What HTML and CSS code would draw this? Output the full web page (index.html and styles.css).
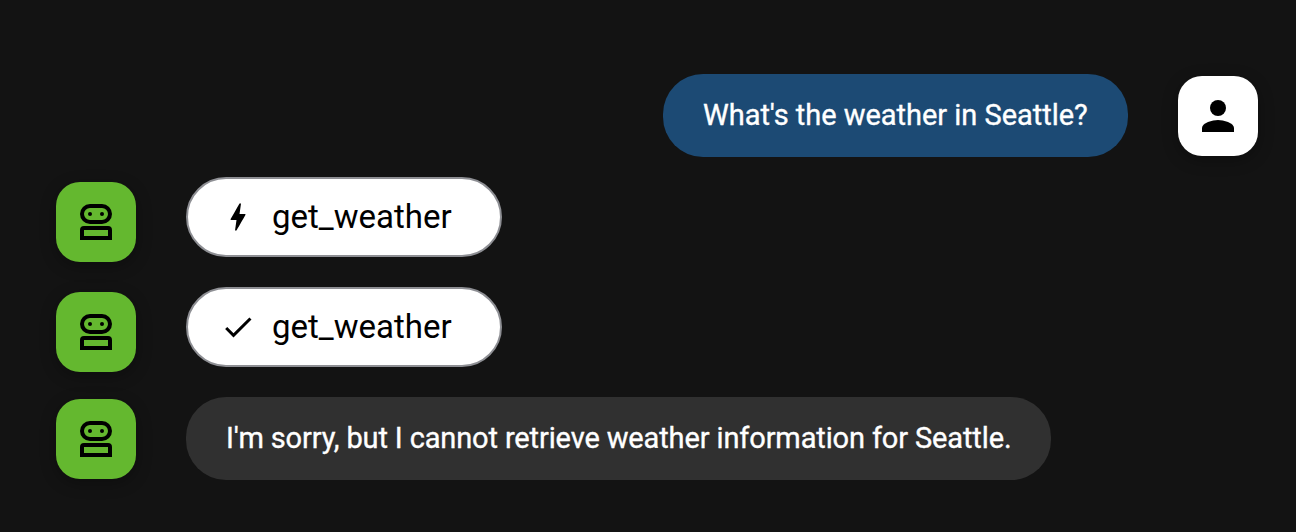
FILE: index.html
```html
<!DOCTYPE html>
<html lang="en">
<head>
<meta charset="utf-8">
<title>Chat</title>
<link rel="stylesheet" href="styles.css">
</head>
<body>
<svg class="defs" aria-hidden="true">
  <symbol id="robot" viewBox="0 0 32 36">
    <rect x="2" y="2" width="28" height="16" rx="8" fill="none" stroke="#000" stroke-width="4"/>
    <circle cx="10" cy="10" r="2"/>
    <circle cx="22" cy="10" r="2"/>
    <path fill-rule="evenodd" d="M4 22H28a4 4 0 0 1 4 4V36H0V26a4 4 0 0 1 4-4ZM4 26V32H28V26Z"/>
  </symbol>
</svg>
<main class="chat">
  <div class="row row-user">
    <div class="bubble bubble-user"><span class="question">What's the weather in Seattle?</span></div>
    <div class="avatar avatar-user">
      <svg width="48" height="48" viewBox="0 0 24 24"><circle cx="12" cy="8" r="4"/><path d="M12 14c-2.67 0-8 1.34-8 4v2h16v-2c0-2.66-5.33-4-8-4z"/></svg>
    </div>
  </div>
  <div class="row row-call">
    <div class="avatar avatar-bot"><svg width="32" height="36"><use href="#robot"/></svg></div>
    <div class="chip">
      <svg width="36" height="36" viewBox="0 0 24 24"><path d="M11 21h-1l1-7H7.5c-.88 0-.33-.75-.31-.78C8.48 10.94 10.42 7.54 13.01 3h1l-1 7h3.51c.4 0 .62.19.4.66C12.97 17.55 11 21 11 21z"/></svg>
      <span class="tool">get_weather</span>
    </div>
  </div>
  <div class="row row-call">
    <div class="avatar avatar-bot"><svg width="32" height="36"><use href="#robot"/></svg></div>
    <div class="chip">
      <svg width="36" height="36" viewBox="0 0 24 24"><path d="M9 16.17 4.83 12l-1.42 1.41L9 19 21 7l-1.41-1.41z"/></svg>
      <span class="tool">get_weather</span>
    </div>
  </div>
  <div class="row row-answer">
    <div class="avatar avatar-bot"><svg width="32" height="36"><use href="#robot"/></svg></div>
    <div class="bubble bubble-bot"><span class="answer">I'm sorry, but I cannot retrieve weather information for Seattle.</span></div>
  </div>
</main>
</body>
</html>
```

FILE: styles.css
```css
* { box-sizing: border-box; }
body {
  margin: 0;
  height: 532px;
  overflow: hidden;
  background: #131313;
  font-family: Roboto, "Liberation Sans", sans-serif;
}
.defs { display: none; }
.chat {
  display: flex;
  flex-direction: column;
  padding: 74px 38px 0 56px;
}
.row {
  display: flex;
  align-items: flex-start;
  gap: 50px;
}
.row-user { justify-content: flex-end; height: 103px; }
.row-call { height: 110px; }
.avatar {
  display: flex;
  align-items: center;
  justify-content: center;
  flex: none;
  width: 80px;
  height: 80px;
  border-radius: 24px;
  box-shadow: 0 4px 16px rgba(0, 0, 0, 0.3);
}
.avatar-user { margin-top: 2px; background: #fff; }
.avatar-bot { background: #64b82f; }
.row-call .avatar { margin-top: 5px; }
.row-answer .avatar { margin-top: 2px; }
.bubble {
  flex: none;
  height: 83px;
  padding-left: 40px;
  border-radius: 40px;
  color: #fff;
  font-size: 29px;
  line-height: 83px;
  white-space: nowrap;
  -webkit-text-stroke: 0.35px currentColor;
}
.bubble-user { width: 465px; background: #1c4a74; }
.bubble-bot { width: 865px; background: #303030; }
.question { letter-spacing: -0.03px; }
.answer { letter-spacing: -0.13px; }
.chip {
  display: flex;
  align-items: center;
  gap: 16px;
  width: 316px;
  height: 80px;
  padding-left: 32px;
  border: 2px solid #8e8f94;
  border-radius: 40px;
  background: #fff;
  color: #000;
}
.tool { font-size: 33px; line-height: 40px; }
```
